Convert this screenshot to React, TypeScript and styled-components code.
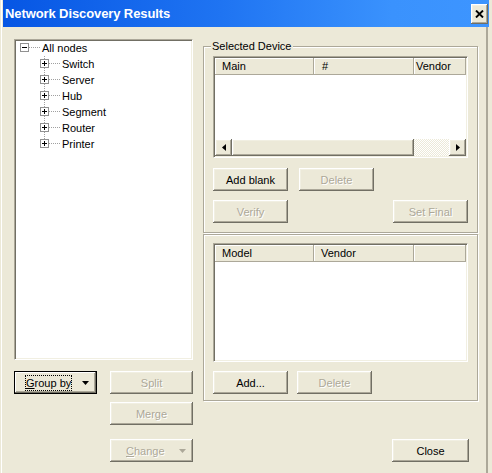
import React from "react";
import styled, { createGlobalStyle, css } from "styled-components";

const GlobalStyle = createGlobalStyle`
  html, body {
    margin: 0;
    padding: 0;
    background: #ece9d8;
  }
  body {
    font-family: "Liberation Sans", Arial, sans-serif;
    font-size: 11px;
    color: #000;
  }
`;

const Window = styled.div`
  width: 492px;
  height: 473px;
  box-sizing: border-box;
  padding: 0 3px;
  overflow: hidden;
  display: flex;
  flex-direction: column;
  background: linear-gradient(
    to right,
    #ece9d8 0 1px,
    #ffffff 1px 2px,
    #ece9d8 2px 486px,
    #aca899 486px 488px,
    #ece9d8 488px
  );
`;

const TitleBar = styled.div`
  height: 27px;
  flex: none;
  display: flex;
  align-items: center;
  justify-content: space-between;
  padding: 0 1px 0 2px;
  background: linear-gradient(to right, #0656e4 0%, #1f74f2 45%, #3a92fd 80%, #3d95ff 100%);
`;

const Title = styled.span`
  color: #fff;
  font-weight: bold;
  font-size: 13px;
  letter-spacing: -0.1px;
`;

const raised = css`
  box-shadow: inset -1px -1px #716f64, inset 1px 1px #ffffff, inset -2px -2px #aca899,
    inset 2px 2px #f1efe2;
`;

const sunken = css`
  border: 1px solid;
  border-color: #aca899 #ffffff #ffffff #aca899;
  box-shadow: inset 1px 1px #716f64, inset -1px -1px #f1efe2;
`;

const CloseBox = styled.button`
  width: 17px;
  height: 20px;
  padding: 0;
  border: none;
  background: #ece9d8;
  display: flex;
  align-items: center;
  justify-content: center;
  ${raised}
`;

const Body = styled.div`
  flex: 1;
  display: flex;
  gap: 10px;
  padding: 12px 0 0 11px;
`;

const LeftColumn = styled.div`
  width: 179px;
  display: flex;
  flex-direction: column;
`;

const TreeBox = styled.div`
  box-sizing: border-box;
  width: 179px;
  height: 321px;
  background: #fff;
  padding: 0 0 0 3px;
  ${sunken}
`;

const TreeRow = styled.div<{ $depth: number }>`
  height: 16px;
  display: flex;
  align-items: center;
  padding-left: ${(p) => p.$depth * 20}px;
`;

const TreeLabel = styled.span`
  margin-left: 2px;
  line-height: 16px;
  white-space: nowrap;
`;

const LeftButtons = styled.div`
  margin-top: 11px;
  display: flex;
  gap: 13px;
`;

const Stack = styled.div`
  display: flex;
  flex-direction: column;
`;

const Button = styled.button<{ $w?: number; $top?: number; $strong?: boolean }>`
  width: ${(p) => p.$w ?? 75}px;
  height: 23px;
  margin: ${(p) => p.$top ?? 0}px 0 0 0;
  box-sizing: border-box;
  padding: 0;
  border: none;
  background: #ece9d8;
  font: 11px "Liberation Sans", Arial, sans-serif;
  color: #000;
  display: flex;
  align-items: center;
  justify-content: center;
  ${raised}
  &:disabled {
    color: #aca899;
    text-shadow: 1px 1px 0 #fff;
  }
  ${(p) =>
    p.$strong &&
    css`
      border: 1px solid #000;
      box-shadow: inset -1px -1px #716f64, inset 1px 1px #ffffff, inset -2px -2px #aca899;
    `}
`;

const DropButton = styled(Button)<{ $pad: number }>`
  justify-content: flex-start;
  padding-left: ${(p) => p.$pad}px;
  padding-right: 7px;
`;

const FocusRing = styled.span`
  outline: 1px dotted #000;
  outline-offset: 0;
  padding: 1px 0;
  line-height: 12px;
`;

const Arrow = styled.svg`
  margin-left: auto;
  flex: none;
`;

const RightColumn = styled.div`
  width: 275px;
  padding-top: 7px;
  display: flex;
  flex-direction: column;
`;

const Group = styled.div<{ $h: number; $top?: number; $padTop: number }>`
  position: relative;
  box-sizing: border-box;
  width: 275px;
  height: ${(p) => p.$h}px;
  margin-top: ${(p) => p.$top ?? 0}px;
  padding: ${(p) => p.$padTop}px 9px 0 9px;
  border: 1px solid #aca899;
  box-shadow: inset 1px 1px #fff, 1px 1px #fff;
`;

const Legend = styled.span`
  position: absolute;
  top: -7px;
  left: 7px;
  padding: 0 1px;
  line-height: 13px;
  background: #ece9d8;
`;

const ListBox = styled.div<{ $h: number }>`
  box-sizing: border-box;
  width: 255px;
  height: ${(p) => p.$h}px;
  background: #fff;
  padding: 1px;
  display: flex;
  flex-direction: column;
  ${sunken}
`;

const HeaderRow = styled.div`
  display: flex;
  height: 17px;
  flex: none;
`;

const HeaderCell = styled.div<{ $w?: number; $pad?: number }>`
  box-sizing: border-box;
  ${(p) => (p.$w ? `width: ${p.$w}px;` : "flex: 1;")}
  height: 17px;
  line-height: 17px;
  padding-left: ${(p) => p.$pad ?? 7}px;
  background: #ece9d8;
  box-shadow: inset -1px -1px #aca899, inset 1px 1px #fff;
  white-space: nowrap;
  overflow: hidden;
`;

const ScrollBar = styled.div`
  margin-top: auto;
  height: 17px;
  display: flex;
  flex: none;
`;

const ScrollArrow = styled.div`
  width: 17px;
  height: 17px;
  flex: none;
  background: #ece9d8;
  display: flex;
  align-items: center;
  justify-content: center;
  ${raised}
`;

const Thumb = styled.div`
  width: 182px;
  height: 17px;
  background: #ece9d8;
  ${raised}
`;

const Track = styled.div`
  flex: 1;
  background-image: conic-gradient(#fff 25%, #ece9d8 0 50%, #fff 0 75%, #ece9d8 0);
  background-size: 2px 2px;
`;

const ButtonRow = styled.div<{ $top: number; $gap?: number; $spread?: boolean }>`
  display: flex;
  margin-top: ${(p) => p.$top}px;
  gap: ${(p) => p.$gap ?? 0}px;
  width: 255px;
  justify-content: ${(p) => (p.$spread ? "space-between" : "flex-start")};
`;

const Footer = styled.div`
  display: flex;
  justify-content: flex-end;
  margin-top: 38px;
  padding-right: 9px;
`;

const Expander = ({ open, root, last }: { open: boolean; root?: boolean; last?: boolean }) => (
  <svg width="22" height="16" viewBox="0 0 22 16" style={{ flex: "none" }}>
    {!root && <line x1="6.5" y1="0" x2="6.5" y2="3" stroke="#a0a0a0" strokeDasharray="1 1" />}
    {!root && !last && <line x1="6.5" y1="12" x2="6.5" y2="16" stroke="#a0a0a0" strokeDasharray="1 1" />}
    <line x1="11" y1="7.5" x2="22" y2="7.5" stroke="#a0a0a0" strokeDasharray="1 1" />
    <rect x="2.5" y="3.5" width="8" height="8" fill="#fff" stroke="#919191" />
    <rect x="4" y="7" width="5" height="1" fill="#000" />
    {!open && <rect x="6" y="5" width="1" height="5" fill="#000" />}
  </svg>
);

const DownArrow = ({ color }: { color: string }) => (
  <Arrow width="7" height="4" viewBox="0 0 7 4">
    <polygon points="0,0 7,0 3.5,4" fill={color} />
  </Arrow>
);

const nodes = ["Switch", "Server", "Hub", "Segment", "Router", "Printer"];

const ListView = ({ h, columns }: { h: number; columns: { label: string; w?: number; pad?: number }[] }) => (
  <ListBox $h={h}>
    <HeaderRow>
      {columns.map((c, i) => (
        <HeaderCell key={i} $w={c.w} $pad={c.pad}>
          {c.label}
        </HeaderCell>
      ))}
    </HeaderRow>
  </ListBox>
);

const App = () => {
  return (
    <>
      <GlobalStyle />
      <Window>
        <TitleBar>
          <Title>Network Discovery Results</Title>
          <CloseBox aria-label="Close">
            <svg width="9" height="8" viewBox="0 0 9 8">
              <path d="M1 0.5 L8 7.5 M8 0.5 L1 7.5" stroke="#000" strokeWidth="1.9" />
            </svg>
          </CloseBox>
        </TitleBar>
        <Body>
          <LeftColumn>
            <TreeBox>
              <TreeRow $depth={0}>
                <Expander open root />
                <TreeLabel>All nodes</TreeLabel>
              </TreeRow>
              {nodes.map((n, i) => (
                <TreeRow key={n} $depth={1}>
                  <Expander open={false} last={i === nodes.length - 1} />
                  <TreeLabel>{n}</TreeLabel>
                </TreeRow>
              ))}
            </TreeBox>
            <LeftButtons>
              <DropButton $w={83} $pad={11} $strong>
                <FocusRing>
                  <u>G</u>roup by
                </FocusRing>
                <DownArrow color="#000" />
              </DropButton>
              <Stack>
                <Button $w={83} disabled>
                  Split
                </Button>
                <Button $w={83} $top={8} disabled>
                  Merge
                </Button>
                <DropButton $w={83} $top={14} $pad={16} disabled>
                  <span>
                    <u>C</u>hange
                  </span>
                  <DownArrow color="#aca899" />
                </DropButton>
              </Stack>
            </LeftButtons>
          </LeftColumn>
          <RightColumn>
            <Group $h={187} $padTop={9}>
              <Legend>Selected Device</Legend>
              <ListBox $h={102}>
                <HeaderRow>
                  <HeaderCell $w={99}>Main</HeaderCell>
                  <HeaderCell $w={100} $pad={8}>#</HeaderCell>
                  <HeaderCell $pad={2}>Vendor</HeaderCell>
                </HeaderRow>
                <ScrollBar>
                  <ScrollArrow>
                    <svg width="4" height="7" viewBox="0 0 4 7">
                      <polygon points="4,0 4,7 0,3.5" fill="#000" />
                    </svg>
                  </ScrollArrow>
                  <Thumb />
                  <Track />
                  <ScrollArrow>
                    <svg width="4" height="7" viewBox="0 0 4 7">
                      <polygon points="0,0 0,7 4,3.5" fill="#000" />
                    </svg>
                  </ScrollArrow>
                </ScrollBar>
              </ListBox>
              <ButtonRow $top={10} $gap={11}>
                <Button>Add blank</Button>
                <Button disabled>Delete</Button>
              </ButtonRow>
              <ButtonRow $top={9} $spread>
                <Button disabled>Verify</Button>
                <Button disabled>Set Final</Button>
              </ButtonRow>
            </Group>
            <Group $h={167} $top={1} $padTop={8}>
              <ListView
                h={119}
                columns={[
                  { label: "Model", w: 99 },
                  { label: "Vendor", w: 100 },
                  { label: "" },
                ]}
              />
              <ButtonRow $top={9} $gap={9}>
                <Button>Add...</Button>
                <Button disabled>Delete</Button>
              </ButtonRow>
            </Group>
            <Footer>
              <Button $w={77}>Close</Button>
            </Footer>
          </RightColumn>
        </Body>
      </Window>
    </>
  );
};

export default App;
